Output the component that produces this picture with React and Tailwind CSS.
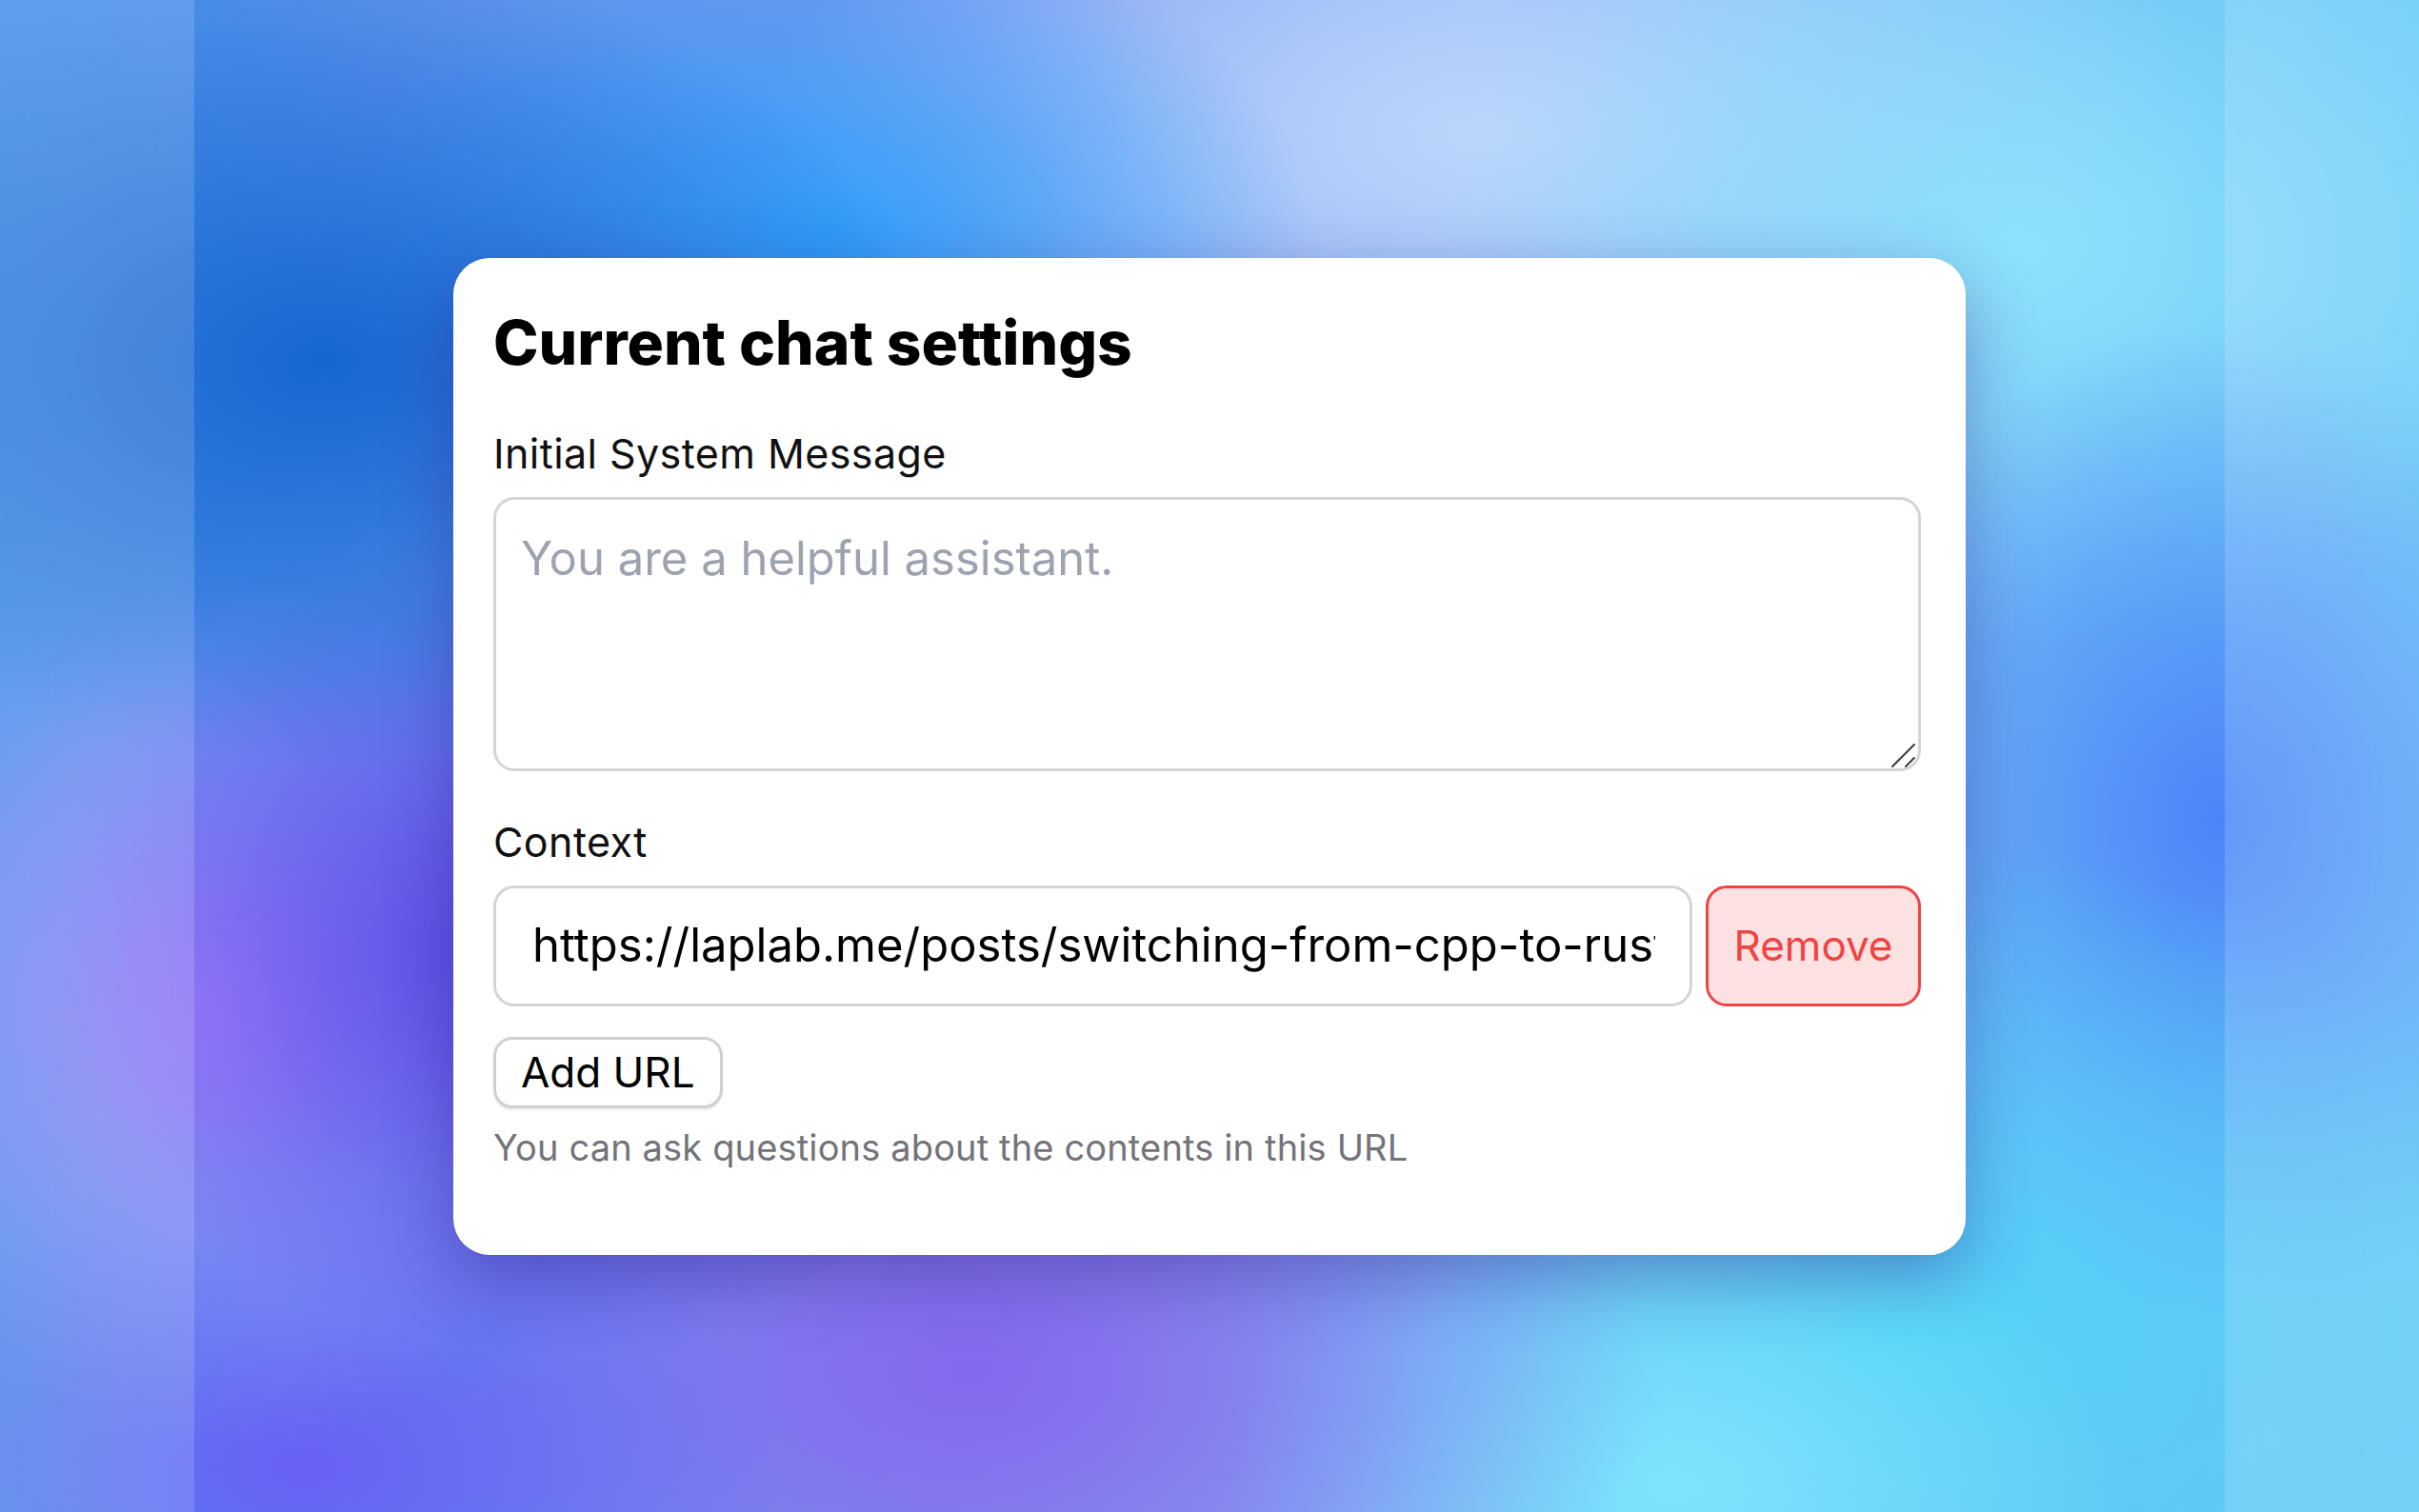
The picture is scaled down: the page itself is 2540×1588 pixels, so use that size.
import React from 'react';

const url = 'https://laplab.me/posts/switching-from-cpp-to-rust';

const ResizeGrip = () => (
  <svg
    className="pointer-events-none absolute right-[5px] bottom-[3px]"
    width="26"
    height="26"
    viewBox="0 0 26 26"
  >
    <line x1="1" y1="24" x2="24" y2="1" stroke="#3a3a3a" strokeWidth="2" strokeLinecap="round" />
    <line x1="15" y1="24" x2="24" y2="15" stroke="#3a3a3a" strokeWidth="2" strokeLinecap="round" />
  </svg>
);

const SettingsCard = () => {
  return (
    <div className="w-[1588px] rounded-[38px] bg-white pl-[42px] pr-[47px] pt-[48px] pb-[91px] shadow-[0_24px_70px_rgba(45,25,130,0.38)]">
      <h1 className="text-[64px] font-extrabold leading-[82px] text-black">
        Current chat settings
      </h1>

      {/* System message */}
      <label className="mt-[51px] block text-[43px] leading-[48px] tracking-[0.01em] text-[#111]">
        Initial System Message
      </label>
      <div className="relative mt-[22px]">
        <textarea
          className="block h-[288px] w-full resize-none rounded-[22px] border-[3px] border-[#d4d4d4] bg-white px-[26px] pt-[26px] text-[49px] leading-[72px] text-black outline-none placeholder:text-[#9ca3af]"
          placeholder="You are a helpful assistant."
        />
        <ResizeGrip />
      </div>

      {/* Context urls */}
      <label className="mt-[50px] block text-[43px] leading-[48px] tracking-[0.01em] text-[#111]">
        Context
      </label>
      <div className="mt-[22px] flex h-[127px] items-stretch gap-[14px]">
        <input
          className="min-w-0 flex-1 rounded-[22px] border-[3px] border-[#d4d4d4] bg-white pl-[38px] pr-[36px] text-[49px] text-black outline-none"
          value={url}
          readOnly
        />
        <button className="w-[226px] rounded-[22px] border-[3px] border-[#ef4444] bg-[#fee2e2] text-[44px] text-[#ef4444]">
          Remove
        </button>
      </div>

      <button className="mt-[32px] block h-[75px] rounded-[20px] border-[3px] border-[#d0d0d0] bg-white px-[26px] text-[44px] leading-none text-black shadow-[0_2px_2px_rgba(0,0,0,0.08)]">
        Add URL
      </button>
      <p className="mt-[19px] text-[38px] leading-[44px] tracking-[0.004em] text-[#73737a]">
        You can ask questions about the contents in this URL
      </p>
    </div>
  );
};

const App = () => {
  return (
    <div className="relative flex h-[1588px] w-[2540px] items-center justify-center overflow-hidden font-['Inter','Noto_Sans',sans-serif] bg-[radial-gradient(ellipse_640px_420px_at_340px_380px,#1766d0_0%,rgba(23,102,208,0)_100%),radial-gradient(ellipse_520px_360px_at_860px_260px,#2fa2fa_0%,rgba(47,162,250,0)_100%),radial-gradient(ellipse_520px_420px_at_560px_1000px,#5b48e8_0%,rgba(91,72,232,0)_100%),radial-gradient(ellipse_420px_460px_at_230px_1060px,#a684fa_0%,rgba(166,132,250,0)_100%),radial-gradient(ellipse_500px_300px_at_320px_1540px,#6a60f6_0%,rgba(106,96,246,0)_100%),radial-gradient(ellipse_720px_420px_at_1020px_1440px,#8568ec_0%,rgba(133,104,236,0)_100%),radial-gradient(ellipse_480px_320px_at_1760px_1560px,#7ee4fc_0%,rgba(126,228,252,0)_100%),radial-gradient(ellipse_720px_520px_at_1980px_1400px,#4fd2f8_0%,rgba(79,210,248,0)_100%),radial-gradient(ellipse_420px_520px_at_2330px_860px,#4c84f8_0%,rgba(76,132,248,0)_100%),radial-gradient(ellipse_620px_420px_at_2120px_260px,#8ee2fb_0%,rgba(142,226,251,0)_100%),radial-gradient(ellipse_760px_380px_at_1560px_140px,#bcd6fb_0%,rgba(188,214,251,0)_100%),linear-gradient(90deg,#3f8ee8_0%,#7e96f0_40%,#8eb6f6_60%,#5fc6f6_100%)]">
      {/* soft side bands */}
      <div className="absolute inset-y-0 left-0 w-[204px] bg-white/15 backdrop-blur-xl" />
      <div className="absolute inset-y-0 right-0 w-[204px] bg-white/15 backdrop-blur-xl" />

      <SettingsCard />
    </div>
  );
};

export default App;
